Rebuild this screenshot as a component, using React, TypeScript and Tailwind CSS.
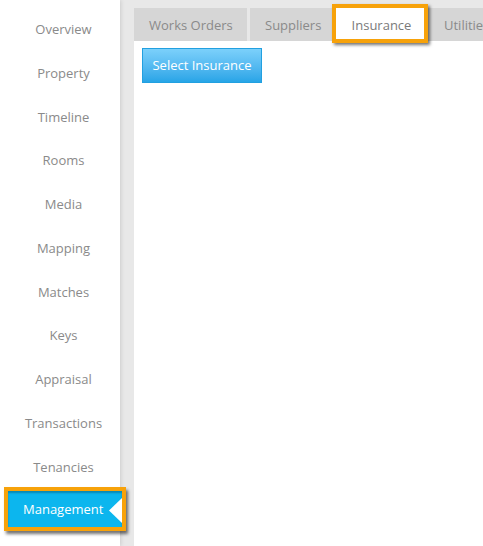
import React from "react";

const items = [
  "Overview",
  "Property",
  "Timeline",
  "Rooms",
  "Media",
  "Mapping",
  "Matches",
  "Keys",
  "Appraisal",
  "Transactions",
  "Tenancies",
];

export default function App() {
  return (
    <div
      className="flex h-[546px] w-[483px] overflow-hidden bg-[#e8e8e8]"
      style={{ fontFamily: '"Open Sans", "Noto Sans", sans-serif' }}
    >
      <div className="relative z-10 flex w-[120px] shrink-0 flex-col bg-white pt-[8px] shadow-[1px_0_4px_rgba(0,0,0,0.12)]">
        {items.map((t) => (
          <div
            key={t}
            className="flex h-[43.75px] items-center justify-center pl-[7px] text-[13px] text-[#8a8a8a]"
          >
            {t}
          </div>
        ))}
        <div className="relative flex h-[43.75px] items-center">
          <div className="absolute left-[4px] top-[-2px] h-[44px] w-[122px] border-4 border-[#f7a20a] bg-[#0cb6ee] shadow-[2px_3px_3px_rgba(0,0,0,0.55),inset_0_2px_2px_rgba(0,0,0,0.25)]">
            <div className="flex h-full items-center pl-[15px] text-[13px] text-white">
              Management
            </div>
            <svg
              className="absolute right-0 top-[7px]"
              width="13"
              height="25"
              viewBox="0 0 13 25"
            >
              <polygon points="13,0 0,12.5 13,25" fill="#ffffff" />
            </svg>
          </div>
        </div>
      </div>
      <div className="flex flex-1 flex-col pl-[14px] pt-[8px]">
        <div className="flex h-[33px] gap-[3px] pt-[3px] text-[13px] text-[#8a8a8a]">
          <div className="-mt-[3px] flex w-[113px] items-center pl-[15px] pt-[3px] bg-[#d6d6d6]">
            Works Orders
          </div>
          <div className="-mt-[3px] flex w-[83px] items-center pl-[15px] pt-[3px] bg-[#d6d6d6]">
            Suppliers
          </div>
          <div className="relative -mt-[3px] flex w-[88px] items-center justify-center pl-[3px] pt-[3px] bg-white text-[#7a7a7a]">
            Insurance
            <div className="absolute left-[-4px] top-[-4px] h-[39px] w-[96px] border-4 border-[#f7a20a] shadow-[2px_2px_3px_rgba(0,0,0,0.55)]" />
          </div>
          <div className="-mt-[3px] flex flex-1 items-center pl-[17px] pt-[3px] bg-[#d6d6d6] whitespace-nowrap">
            Utilities
          </div>
        </div>
        <div className="flex-1 bg-white pl-[8px] pt-[7px]">
          <div className="flex h-[35px] w-[120px] items-center justify-center border border-[#22a0e0] bg-gradient-to-b from-[#7bd0fb] to-[#27a5e7] pt-[1px] text-[13px] text-white">
            Select Insurance
          </div>
        </div>
      </div>
    </div>
  );
}
